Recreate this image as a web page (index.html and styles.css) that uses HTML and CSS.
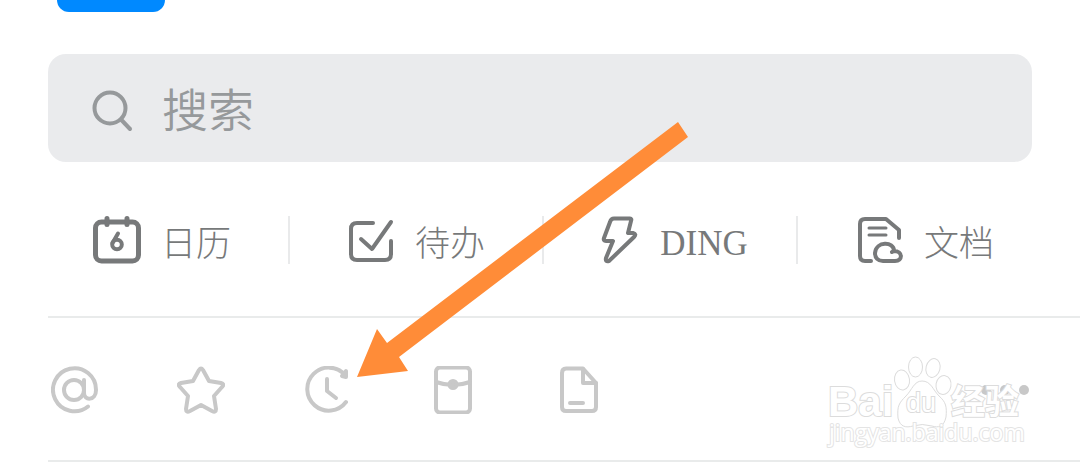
FILE: index.html
```
<!DOCTYPE html>
<html lang="zh-CN">
<head>
  <meta charset="UTF-8">
  <meta name="viewport" content="width=device-width, initial-scale=1">
  <title>搜索</title>
  <link rel="stylesheet" href="styles.css">
</head>
<body>
  <div class="page">
    <header class="header">
      <div class="avatar"></div>
    </header>

    <!-- SEARCH -->
    <label class="search">
      <svg class="search-icon" viewBox="0 0 42 42" aria-hidden="true">
        <circle cx="18" cy="18" r="15.500"/>
        <path d="M29 29.500L38 39"/>
      </svg>
      <input class="search-input" type="text" placeholder="搜索" aria-label="搜索">
    </label>

    <!-- SHORTCUTS -->
    <nav class="shortcuts">
      <a class="shortcut" href="#">
        <svg class="icon" viewBox="0 0 48 48" aria-hidden="true">
          <rect x="2.500" y="6" width="43" height="39" rx="6"/>
          <path d="M14 2.500v6M34 2.500v6"/>
          <path class="medium" d="M25 17.500L19.500 27"/>
          <circle class="medium" cx="24" cy="28.500" r="4.800"/>
        </svg>
        <span>日历</span>
      </a>
      <a class="shortcut" href="#">
        <svg class="icon" viewBox="0 0 48 48" aria-hidden="true">
          <path class="medium" d="M26 7H10Q4 7 4 13V38Q4 44 10 44H38Q44 44 44 38V25"/>
          <path class="medium" d="M14 23L25 33L44 6"/>
        </svg>
        <span>待办</span>
      </a>
      <a class="shortcut" href="#">
        <svg class="icon" viewBox="0 0 48 48" aria-hidden="true">
          <path class="medium" d="M22 2.500H38Q40 2.500 39 5L36 17H41Q45 18 42 21L17 45Q13 46 14 42L21 25H14Q11 25 12 22L18 6Q19 2.500 22 2.500Z"/>
        </svg>
        <span class="latin">DING</span>
      </a>
      <a class="shortcut" href="#">
        <svg class="icon" viewBox="0 0 48 48" aria-hidden="true">
          <path class="medium" d="M15 45H9Q4 45 4 40V8Q4 3 9 3H30L43 14V22"/>
          <path class="thin" d="M13 12H30M13 19H30"/>
          <path class="medium" d="M27 45H39C47 45 47 35 38 35C38 25 20 25 19 37C19 42 22 45 27 45ZM38 35L36 36"/>
        </svg>
        <span>文档</span>
      </a>
    </nav>

    <!-- TOOLBAR -->
    <div class="toolbar">
      <button class="tool" type="button" aria-label="@">
        <svg class="icon" viewBox="0 0 48 48" aria-hidden="true">
          <circle cx="23" cy="24" r="10"/>
          <path d="M33 14V27C33 35 45 35 45 24A21.500 21.500 0 1 0 37 40.500"/>
        </svg>
      </button>
      <button class="tool" type="button" aria-label="收藏">
        <svg class="icon" viewBox="0 0 48 48" aria-hidden="true">
          <path d="M22 4Q24 1 26 4L32 15L44 17Q48 18 45 21L37 30L39 43Q39 47 35 45L24 39L13 45Q9 47 9 43L11 30L3 21Q0 18 4 17L16 15Z"/>
        </svg>
      </button>
      <button class="tool" type="button" aria-label="最近">
        <svg class="icon" viewBox="0 0 48 48" aria-hidden="true">
          <path d="M42 9A21.500 21.500 0 1 0 43 36"/>
          <path d="M39 10L43 5V11Z"/>
          <path d="M24 13V25L33 32"/>
        </svg>
      </button>
      <button class="tool" type="button" aria-label="红包">
        <svg class="icon" viewBox="0 0 48 48" aria-hidden="true">
          <rect x="7" y="1.500" width="34" height="45" rx="4"/>
          <path d="M7 16Q24 22 41 16"/>
          <circle class="filled" cx="24" cy="18.500" r="3.500"/>
        </svg>
      </button>
      <button class="tool" type="button" aria-label="文件">
        <svg class="icon" viewBox="0 0 48 48" aria-hidden="true">
          <path d="M11 2.500H28L41 17V41Q41 45 37 45H11Q7 45 7 41V7Q7 2.500 11 2.500Z"/>
          <path d="M28 3V17H41M15 37H28"/>
        </svg>
      </button>
      <button class="tool tool-more" type="button" aria-label="更多">
        <svg class="icon dots" viewBox="0 0 48 48" aria-hidden="true">
          <circle cx="5" cy="24" r="5"/>
          <circle cx="24" cy="24" r="5"/>
          <circle cx="43" cy="24" r="5"/>
        </svg>
      </button>

      <svg class="watermark" viewBox="0 0 210 105" aria-hidden="true">
        <ellipse cx="82" cy="30" rx="7.500" ry="10" transform="rotate(-8 82 30)"/>
        <ellipse cx="95.500" cy="17" rx="7" ry="10"/>
        <ellipse cx="113" cy="18" rx="7" ry="9.500" transform="rotate(14 113 18)"/>
        <ellipse cx="123.500" cy="35" rx="7.500" ry="9.500" transform="rotate(10 123.500 35)"/>
        <path d="M102 31C111 31 113 40 119 46C126 52 127 57 126 67C124 77 118 78 112 76Q102 73 93 76C86 78 80 77 78 68C77 56 79 53 86 46C92 40 94 31 102 31Z"/>
        <text class="wm-brand" x="8" y="66">Bai</text>
        <text class="wm-du" x="86" y="62">du</text>
        <text class="wm-cn" x="131" y="64">经验</text>
        <text class="wm-url" x="9" y="91">jingyan.baidu.com</text>
      </svg>
    </div>

    <svg class="arrow" viewBox="0 0 332 256" aria-hidden="true">
      <path d="M0 255L20 207L30 221L321 0L331 15L42 235L51 249Z"/>
    </svg>
  </div>
</body>
</html>
```
FILE: styles.css
```
* {
  box-sizing: border-box;
}

body {
  margin: 0;
  background-color: #fff;
  font-family: "Liberation Serif", "Noto Sans CJK SC", serif;
  color: #77797a;
}

.page {
  position: relative;
}

.header {
  height: 54px;
  padding-left: 57px;
}

.avatar {
  width: 108px;
  height: 12px;
  border-radius: 0 0 16px 16px;
  background-color: #0089ff;
}

/* search box */
.search {
  display: flex;
  align-items: center;
  gap: 28px;
  height: 108px;
  margin: 0 48px;
  padding: 6px 44px 0;
  border-radius: 18px;
  background-color: #eaebed;
}

.search-icon {
  flex: none;
  width: 42px;
  height: 42px;
  fill: none;
  stroke: #96999b;
  stroke-width: 4;
  stroke-linecap: round;
}

.search-input {
  flex: 1;
  min-width: 0;
  padding: 0;
  border: none;
  outline: none;
  background: none;
  font-family: inherit;
  font-size: 46px;
  font-weight: 350;
  color: #77797a;
}

.search-input::placeholder {
  color: #96999b;
  opacity: 1;
}

.icon {
  flex: none;
  display: block;
  width: 48px;
  height: 48px;
  fill: none;
  stroke: currentColor;
  stroke-width: 5;
  stroke-linecap: round;
  stroke-linejoin: round;
}

.icon .medium {
  stroke-width: 4;
}

.icon .thin {
  stroke-width: 3;
}

.icon .filled {
  fill: currentColor;
}

/* shortcuts */
.shortcuts {
  display: grid;
  grid-template-columns: repeat(4, 1fr);
  padding: 54px 28px 52px 36px;
}

.shortcut {
  display: flex;
  align-items: center;
  justify-content: center;
  gap: 20px;
  height: 48px;
  border-right: 2px solid #e9eaeb;
  font-size: 35px;
  font-weight: 300;
  color: inherit;
  text-decoration: none;
}

.shortcut:last-child {
  border-right: none;
}

.latin {
  padding-top: 8px;
}

/* toolbar */
.toolbar {
  position: relative;
  display: flex;
  align-items: center;
  gap: 78px;
  height: 146px;
  margin-left: 48px;
  padding: 2px 51px 0 3px;
  border-top: 2px solid #e9ebeb;
  border-bottom: 2px solid #e9ebeb;
}

.tool {
  padding: 0;
  border: none;
  background: none;
  color: #c8c8c8;
  cursor: pointer;
}

.tool .icon {
  stroke-width: 4;
}

.tool-more {
  margin-left: auto;
}

.tool .dots {
  fill: currentColor;
  stroke: none;
}

.watermark {
  position: absolute;
  right: 50px;
  top: 32px;
  width: 210px;
  height: 105px;
  fill: #fff;
  stroke: #dcdcdc;
  stroke-width: 1;
  pointer-events: none;
}

.watermark text {
  stroke-width: 2;
  paint-order: stroke;
}

.wm-brand {
  font: bold 42px "Liberation Sans", sans-serif;
}

.wm-du {
  font: 27px "Liberation Sans", sans-serif;
}

.wm-cn {
  font: bold 34px "Noto Sans CJK SC", sans-serif;
}

.wm-url {
  font: 23px "Open Sans", sans-serif;
  stroke: #e4e4e4;
}

/* arrow pointing at the recent button */
.arrow {
  position: absolute;
  left: 357px;
  top: 122px;
  width: 332px;
  height: 256px;
  fill: #ff8c38;
  pointer-events: none;
}
```
